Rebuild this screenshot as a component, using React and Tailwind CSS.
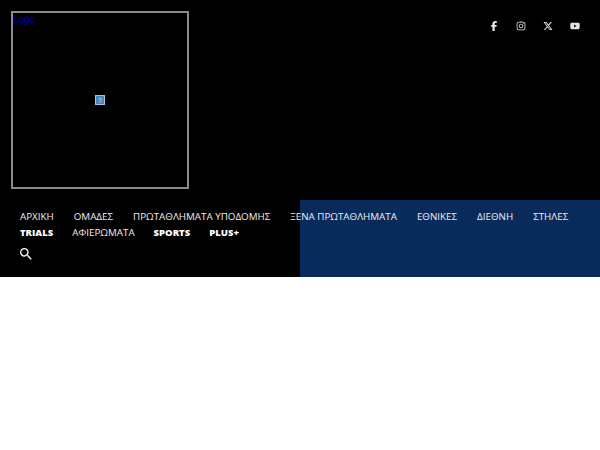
import React from "react";
import { FaFacebookF, FaInstagram, FaXTwitter, FaYoutube } from "react-icons/fa6";
import { MdSearch } from "react-icons/md";

const row1 = ["ΑΡΧΙΚΗ", "ΟΜΑΔΕΣ", "ΠΡΩΤΑΘΛΗΜΑΤΑ ΥΠΟΔΟΜΗΣ", "ΞΕΝΑ ΠΡΩΤΑΘΛΗΜΑΤΑ", "ΕΘΝΙΚΕΣ", "ΔΙΕΘΝΗ", "ΣΤΗΛΕΣ"];

export default function App() {
  return (
    <div className="min-h-[450px] bg-white font-['Open_Sans','Noto_Sans',sans-serif]">
      <header className="bg-black h-[200px] flex justify-between items-start">
        <div className="ml-[11px] mt-[11px] w-[178px] h-[178px] border-2 border-[#8c8c8c] relative text-[10px] leading-[12px] text-[#0000b4] font-['Liberation_Sans',sans-serif]">
          <span className="absolute left-0 top-[1px]">Logo</span>
          <div className="absolute left-[82px] top-[82px] w-[10px] h-[10px] bg-[#a9c4dc] p-[1px]">
            <div className="w-full h-full bg-[#3f88c0] flex items-center justify-center text-[7px] leading-none text-[#cfe4f5]">?</div>
          </div>
        </div>
        <div className="flex items-center gap-[17px] mt-[21px] mr-[20px] text-[#e6e6e6]">
          <FaFacebookF className="w-[10px] h-[10px]" />
          <FaInstagram className="w-[10px] h-[10px]" />
          <FaXTwitter className="w-[10px] h-[10px]" />
          <FaYoutube className="w-[10px] h-[10px]" />
        </div>
      </header>
      <nav className="h-[77px] bg-[linear-gradient(90deg,#000_50%,#082b5c_50%)] px-[20px] pt-[9px] text-[9.8px] text-[#eeeeee]">
        <div className="flex gap-[20px] h-[16px] items-center whitespace-nowrap">
          {row1.map((t) => <span key={t}>{t}</span>)}
        </div>
        <div className="flex gap-[19px] h-[16px] items-center whitespace-nowrap">
          <span className="font-extrabold text-[9.5px] text-white">TRIALS</span>
          <span>ΑΦΙΕΡΩΜΑΤΑ</span>
          <span className="font-extrabold text-[9.5px] text-white">SPORTS</span>
          <span className="font-extrabold text-[9.5px] text-white">PLUS+</span>
        </div>
        <div className="mt-[5px] -ml-[2px]">
          <MdSearch className="w-[16px] h-[16px] text-white" />
        </div>
      </nav>
    </div>
  );
}
